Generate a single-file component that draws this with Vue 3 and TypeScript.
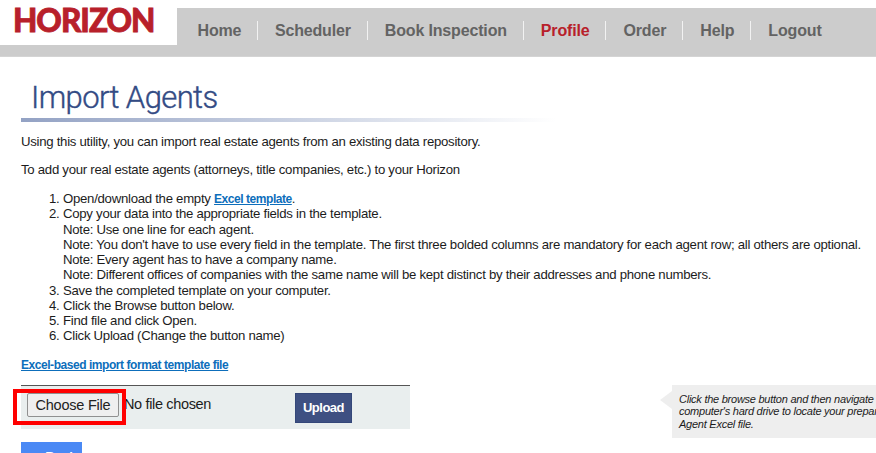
<script setup lang="ts">
interface NavItem { label: string; active?: boolean }
interface Step { text: string; link?: string; notes?: string[] }

const nav: NavItem[] = [
  { label: 'Home' },
  { label: 'Scheduler' },
  { label: 'Book Inspection' },
  { label: 'Profile', active: true },
  { label: 'Order' },
  { label: 'Help' },
  { label: 'Logout' },
]

const steps: Step[] = [
  { text: 'Open/download the empty ', link: 'Excel template' },
  {
    text: 'Copy your data into the appropriate fields in the template.',
    notes: [
      'Note: Use one line for each agent.',
      "Note: You don't have to use every field in the template. The first three bolded columns are mandatory for each agent row; all others are optional.",
      'Note: Every agent has to have a company name.',
      'Note: Different offices of companies with the same name will be kept distinct by their addresses and phone numbers.',
    ],
  },
  { text: 'Save the completed template on your computer.' },
  { text: 'Click the Browse button below.' },
  { text: 'Find file and click Open.' },
  { text: 'Click Upload (Change the button name)' },
]
</script>

<template>
  <div class="page">
    <header class="header">
      <div class="logo">HORIZON</div>
      <nav class="nav">
        <a v-for="item in nav" :key="item.label" :class="{ active: item.active }">{{ item.label }}</a>
      </nav>
    </header>
    <main class="main">
      <h1>Import Agents</h1>
      <div class="rule"></div>
      <p class="intro">Using this utility, you can import real estate agents from an existing data repository.</p>
      <p class="lead">To add your real estate agents (attorneys, title companies, etc.) to your Horizon</p>
      <ol class="steps">
        <li v-for="(step, i) in steps" :key="i">
          <span class="num">{{ i + 1 }}.</span>
          <div class="body">
            <div>{{ step.text }}<template v-if="step.link"><a class="link">{{ step.link }}</a>.</template></div>
            <div v-for="note in step.notes" :key="note">{{ note }}</div>
          </div>
        </li>
      </ol>
      <div class="format"><a class="link">Excel-based import format template file</a></div>
      <div class="row">
        <div class="upload-bar">
          <button class="choose">Choose File</button>
          <span class="chosen">No file chosen</span>
          <button class="upload">Upload</button>
          <div class="highlight"></div>
        </div>
        <aside class="tip">
          <div>Click the browse button and then navigate</div>
          <div>computer's hard drive to locate your prepared</div>
          <div>Agent Excel file.</div>
        </aside>
      </div>
      <button class="back">&lt;&lt; Back</button>
    </main>
  </div>
</template>

<style>
body { margin: 0; overflow: hidden; background: #fff; }
</style>

<style scoped>
.page {
  width: 876px;
  height: 453px;
  overflow: hidden;
  font-family: "Liberation Sans", Arial, sans-serif;
  font-size: 13.2px;
  letter-spacing: -0.275px;
  line-height: 15.27px;
  color: #1c1c1c;
  white-space: nowrap;
}
.header {
  display: flex;
  height: 57px;
  box-sizing: border-box;
  background: linear-gradient(#fff 8px, #ccc 8px);
  border-bottom: 1px solid #d4d4d4;
}
.logo {
  flex: none;
  width: 177px;
  height: 45px;
  box-sizing: border-box;
  padding-left: 13px;
  background: #fff;
  color: #b8202a;
  font: 900 31.5px/40px Lato, sans-serif;
  letter-spacing: -1px;
  -webkit-text-stroke: 0.8px #b8202a;
}
.nav { display: flex; padding-top: 21px; height: 19px; }
.nav a {
  padding: 0 15.8px 0 17.2px;
  border-left: 1px solid #f2f2f2;
  color: #636363;
  font-size: 16px;
  font-weight: bold;
  letter-spacing: -0.16px;
  line-height: 19px;
}
.nav a:first-child { padding-left: 20.5px; padding-right: 15.4px; border-left: 0; }
.nav a.active { color: #b8202a; }
.main { padding-left: 21px; }
h1 {
  margin: 22px 0 0 10px;
  height: 39px;
  color: #334b84;
  font: 300 31px/37px Roboto, sans-serif;
  letter-spacing: -0.6px;
  -webkit-text-stroke: 0.4px #334b84;
}
.rule { width: 535px; height: 4px; background: linear-gradient(90deg, #93a2c4, #fff); }
p { margin: 0; }
.intro { padding-top: 12px; }
.lead { padding-top: 13px; }
.steps { margin: 0; padding: 13.5px 0 0 28px; height: 152.4px; list-style: none; }
.steps li { display: flex; }
.num { flex: none; width: 14px; }
.link { color: #0d6ebb; font-size: 12px; letter-spacing: -0.45px; line-height: 12px; font-weight: bold; text-decoration: underline; }
.format { padding-top: 13.2px; height: 16px; }
.row { display: flex; margin-top: 12.4px; height: 53px; }
.upload-bar {
  flex: none;
  position: relative;
  display: flex;
  width: 389px;
  height: 44px;
  box-sizing: border-box;
  border-top: 1px solid #555;
  background: #e9eeee;
}
button { box-sizing: border-box; padding: 0; font-family: inherit; }
.choose {
  width: 92px;
  height: 24px;
  margin: 7px 0 0 6px;
  border: 1px solid #909090;
  border-radius: 2px;
  background: #efefef;
  color: #222;
  font-size: 14.5px;
  letter-spacing: -0.22px;
}
.chosen { width: 171px; padding-left: 5px; font-size: 14.5px; letter-spacing: -0.35px; line-height: 37px; box-sizing: border-box; }
.upload {
  width: 57px;
  height: 30px;
  margin: 7px 0 0 5px;
  padding-bottom: 1px;
  border: 1px solid #344779;
  background: #3e5082;
  color: #fff;
  font-size: 13px;
  font-weight: bold;
  letter-spacing: -0.5px;
}
.highlight {
  position: absolute;
  left: -8px;
  top: 3px;
  width: 113px;
  height: 36px;
  box-sizing: border-box;
  border: 4px solid #f00;
}
.tip {
  flex: none;
  position: relative;
  width: 260px;
  height: 53px;
  box-sizing: border-box;
  margin-left: 262px;
  padding: 8px 0 0 7px;
  background: #eee;
  font-size: 11px;
  font-style: italic;
  letter-spacing: -0.25px;
  line-height: 12.4px;
}
.tip::before {
  content: "";
  position: absolute;
  left: -12px;
  top: 6px;
  border: 9px solid transparent;
  border-left: 0;
  border-right: 12px solid #eee;
}
.back {
  display: block;
  width: 61px;
  height: 28px;
  margin-top: 4px;
  border: 0;
  background: #4a89f5;
  color: #fff;
  font-size: 13px;
  font-weight: bold;
}
</style>
